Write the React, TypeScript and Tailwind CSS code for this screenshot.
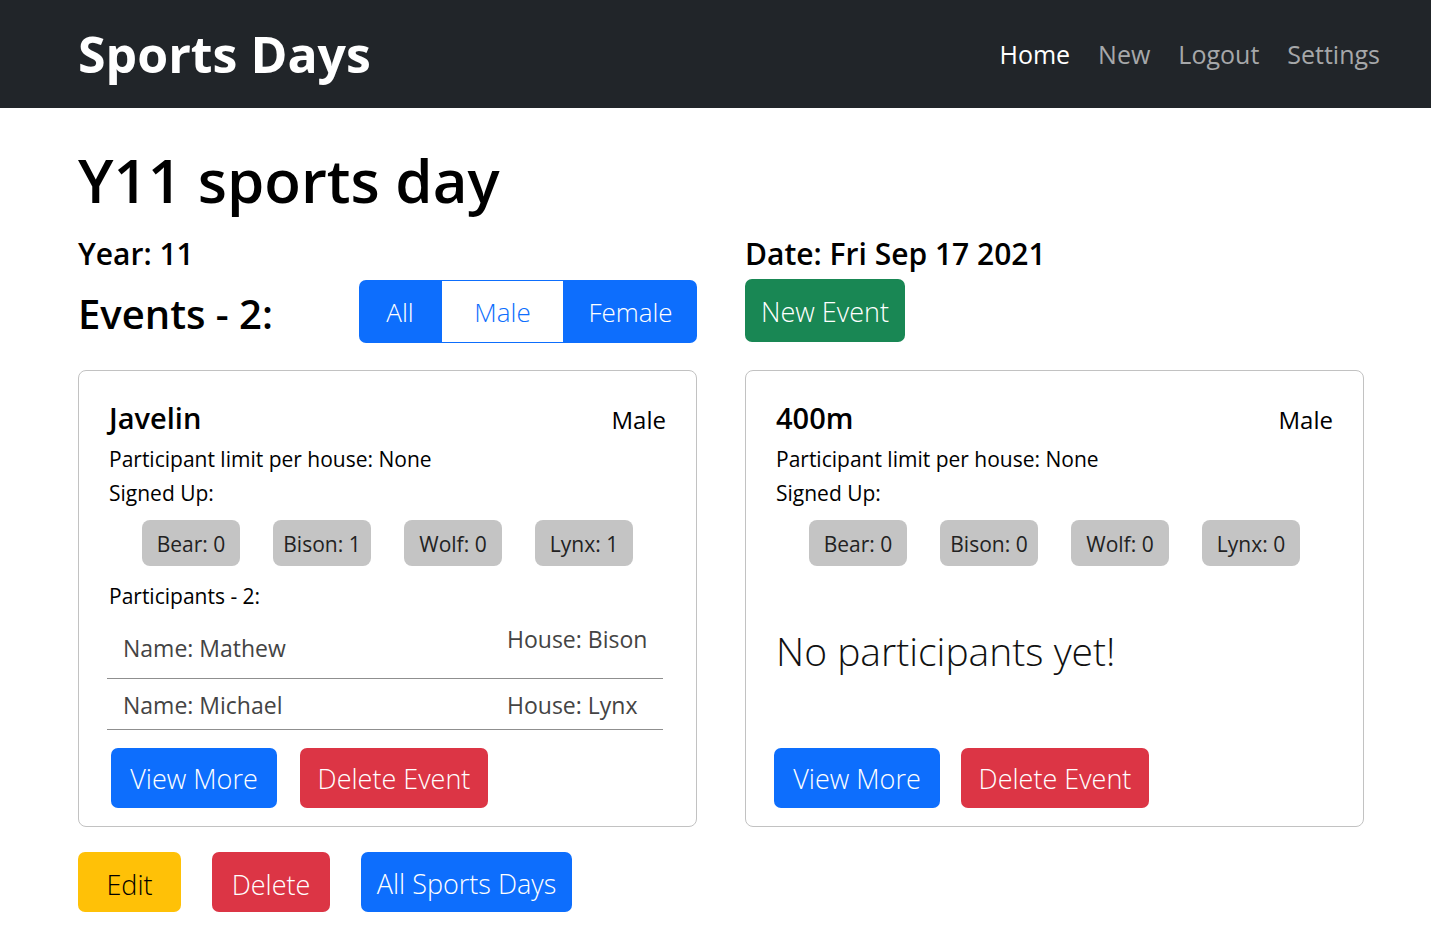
import React from 'react';

type Badge = { house: string; count: number };
type Participant = { name: string; house: string };
type SportEvent = {
  title: string;
  gender: string;
  badges: Badge[];
  participants: Participant[];
};

const events: SportEvent[] = [
  {
    title: 'Javelin',
    gender: 'Male',
    badges: [
      { house: 'Bear', count: 0 },
      { house: 'Bison', count: 1 },
      { house: 'Wolf', count: 0 },
      { house: 'Lynx', count: 1 },
    ],
    participants: [
      { name: 'Mathew', house: 'Bison' },
      { name: 'Michael', house: 'Lynx' },
    ],
  },
  {
    title: '400m',
    gender: 'Male',
    badges: [
      { house: 'Bear', count: 0 },
      { house: 'Bison', count: 0 },
      { house: 'Wolf', count: 0 },
      { house: 'Lynx', count: 0 },
    ],
    participants: [],
  },
];

function Navbar() {
  return (
    <nav className="flex h-[108px] items-center justify-between bg-[#212529] pl-[78px] pr-[37px]">
      <a className="text-[50px] font-bold leading-none text-white">Sports Days</a>
      <div className="flex items-center pt-[2px] text-[25px]">
        <a className="px-[14px] text-white">Home</a>
        <a className="px-[14px] text-[#a6a8aa]">New</a>
        <a className="px-[14px] text-[#a6a8aa]">Logout</a>
        <a className="px-[14px] text-[#a6a8aa]">Settings</a>
      </div>
    </nav>
  );
}

function EventCard({ ev }: { ev: SportEvent }) {
  const empty = ev.participants.length === 0;
  return (
    <div className="flex flex-col rounded-[8px] border border-[#c2c2c2] px-[30px] pt-[27px] pb-[18px]">
      <div className="flex items-baseline justify-between">
        <h3 className="text-[29px] font-semibold leading-[40px]">{ev.title}</h3>
        <span className="text-[24px] leading-[40px]">{ev.gender}</span>
      </div>
      <p className="mt-[4px] text-[21px] leading-[30px]">Participant limit per house: None</p>
      <p className="mt-[4px] text-[21px] leading-[30px]">Signed Up:</p>
      <div className="mt-[12px] flex justify-evenly">
        {ev.badges.map((b) => (
          <span
            key={b.house}
            className="flex h-[46px] w-[98px] items-center justify-center rounded-[8px] bg-[#c4c4c4] pt-[3px] text-[21px] text-[#222]"
          >
            {b.house}: {b.count}
          </span>
        ))}
      </div>
      {empty ? (
        <p className="mt-[60px] text-[39px] font-light leading-[50px] text-[#111]">No participants yet!</p>
      ) : (
        <>
          <p className="mt-[15px] text-[21px] leading-[30px]">Participants - {ev.participants.length}:</p>
          <ul className="mt-[10px] mr-[3px] ml-[-2px]">
            {ev.participants.map((p, i) => (
              <li
                key={p.name}
                className={`flex justify-between border-b border-[#8f8f8f] pl-[16px] pr-[14px] text-[23px] text-[#444] ${
                  i === 0 ? 'h-[58px] items-start' : 'h-[51px] items-center pt-[2px]'
                }`}
              >
                <span className={i === 0 ? 'mt-[10px]' : ''}>Name: {p.name}</span>
                <span className={`w-[142px] ${i === 0 ? 'mt-[1px]' : ''}`}>House: {p.house}</span>
              </li>
            ))}
          </ul>
        </>
      )}
      <div className={`mt-auto flex ${empty ? 'ml-[-2px] gap-[21px] pt-[18px]' : 'ml-[2px] gap-[23px] pt-[18px]'}`}>
        <button className="h-[60px] w-[166px] rounded-[7px] bg-[#0d6efd] pt-[3px] text-[27px] font-light text-white">View More</button>
        <button className="h-[60px] w-[188px] rounded-[7px] bg-[#dc3545] pt-[3px] text-[27px] font-light text-white">Delete Event</button>
      </div>
    </div>
  );
}

export default function App() {
  return (
    <div className="min-h-screen bg-white font-['Open_Sans',sans-serif] text-black">
      <Navbar />
      <main className="ml-[78px] w-[1286px] pt-[36px] pb-[18px]">
        <h1 className="text-[60px] font-semibold leading-[72px]">Y11 sports day</h1>
        <div className="mt-[20px] grid grid-cols-2 gap-x-[48px]">
          <h4 className="text-[30px] font-semibold leading-[36px]">Year: 11</h4>
          <h4 className="text-[30px] font-semibold leading-[36px]">Date: Fri Sep 17 2021</h4>
          <div className="mt-[8px] flex items-center justify-between">
            <h2 className="mt-[4px] text-[40px] font-semibold leading-[50px]">Events - 2:</h2>
            <div className="flex h-[63px] overflow-hidden rounded-[7px] pt-[0px] text-[26px] font-light">
              <button className="w-[82px] bg-[#0d6efd] pt-[2px] text-white">All</button>
              <button className="w-[123px] border border-[#0d6efd] bg-white pt-[2px] text-[#0d6efd]">Male</button>
              <button className="w-[133px] bg-[#0d6efd] pt-[2px] text-white">Female</button>
            </div>
          </div>
          <div className="mt-[7px]">
            <button className="h-[63px] w-[160px] rounded-[7px] bg-[#198754] pt-[3px] text-[27px] font-light text-white">New Event</button>
          </div>
          <div className="col-span-2 mt-[27px] grid grid-cols-2 items-stretch gap-x-[48px]">
            {events.map((ev) => (
              <EventCard key={ev.title} ev={ev} />
            ))}
          </div>
        </div>
        <div className="mt-[25px] flex gap-[31px]">
          <button className="h-[60px] w-[103px] rounded-[7px] bg-[#ffc107] pt-[6px] text-[27px] font-light text-black">Edit</button>
          <button className="h-[60px] w-[118px] rounded-[7px] bg-[#dc3545] pt-[6px] text-[27px] font-light text-white">Delete</button>
          <button className="h-[60px] w-[211px] rounded-[7px] bg-[#0d6efd] pt-[4px] text-[27px] font-light text-white">All Sports Days</button>
        </div>
      </main>
    </div>
  );
}
